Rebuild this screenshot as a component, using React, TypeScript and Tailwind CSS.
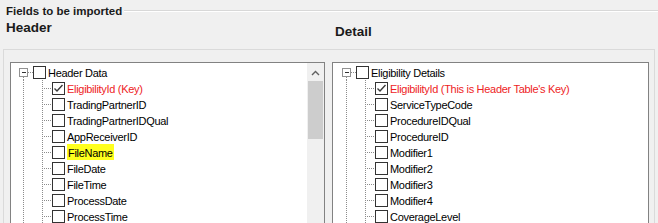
import React from 'react';

type Node = { label: string; checked?: boolean; red?: boolean; mark?: boolean };

const headerFields: Node[] = [
    { label: 'EligibilityId (Key)', checked: true, red: true },
    { label: 'TradingPartnerID' },
    { label: 'TradingPartnerIDQual' },
    { label: 'AppReceiverID' },
    { label: 'FileName', mark: true },
    { label: 'FileDate' },
    { label: 'FileTime' },
    { label: 'ProcessDate' },
    { label: 'ProcessTime' },
];

const detailFields: Node[] = [
    { label: "EligibilityId (This is Header Table's Key)", checked: true, red: true },
    { label: 'ServiceTypeCode' },
    { label: 'ProcedureIDQual' },
    { label: 'ProcedureID' },
    { label: 'Modifier1' },
    { label: 'Modifier2' },
    { label: 'Modifier3' },
    { label: 'Modifier4' },
    { label: 'CoverageLevel' },
];

const CheckBox = ({ checked }: { checked?: boolean }) => (
    <span className="mt-[2px] w-[13px] h-[13px] shrink-0 border border-[#333333] bg-white flex items-center justify-center">
        {checked && (
            <svg width="11" height="11" viewBox="0 0 11 11">
                <path d="M1.5 5.5 L4 8 L9.5 2" fill="none" stroke="#3a3a3a" strokeWidth="1.4" />
            </svg>
        )}
    </span>
);

const Label = ({ node }: { node: Node }) => (
    <span
        className={
            'ml-[2px] h-[16px] pt-[1px] leading-[16px] whitespace-nowrap ' +
            (node.red ? 'text-[#ee1c24] ' : 'text-black ') +
            (node.mark ? 'bg-[#ffff1e] -ml-[0px] px-[1px]' : '')
        }
    >
        {node.label}
    </span>
);

const RootRow = ({ label }: { label: string }) => (
    <div className="flex items-start h-[16px]">
        <svg width="22" height="16" viewBox="0 0 22 16" className="shrink-0" shapeRendering="crispEdges">
            <line x1="12.5" y1="13" x2="12.5" y2="16" stroke="#8c8c8c" strokeDasharray="1 1" />
            <line x1="17" y1="8.5" x2="22" y2="8.5" stroke="#8c8c8c" strokeDasharray="1 1" />
            <rect x="8.5" y="4.5" width="8" height="8" fill="#ffffff" stroke="#919191" />
            <line x1="10.5" y1="8.5" x2="15" y2="8.5" stroke="#333333" />
        </svg>
        <CheckBox />
        <Label node={{ label }} />
    </div>
);

const ChildRow = ({ node }: { node: Node }) => (
    <div className="flex items-start h-[16px]">
        <svg width="41" height="16" viewBox="0 0 41 16" className="shrink-0" shapeRendering="crispEdges">
            <line x1="12.5" y1="0" x2="12.5" y2="16" stroke="#8c8c8c" strokeDasharray="1 1" />
            <line x1="31.5" y1="0" x2="31.5" y2="16" stroke="#8c8c8c" strokeDasharray="1 1" />
            <line x1="33" y1="8.5" x2="41" y2="8.5" stroke="#8c8c8c" strokeDasharray="1 1" />
        </svg>
        <CheckBox checked={node.checked} />
        <Label node={node} />
    </div>
);

const Tree = ({ root, items }: { root: string; items: Node[] }) => (
    <div className="flex flex-col pt-[1px]">
        <RootRow label={root} />
        {items.map(n => (
            <ChildRow key={n.label} node={n} />
        ))}
    </div>
);

export default function App() {
    return (
        <div className="w-[658px] h-[223px] overflow-hidden bg-[#f0f0f0] font-['Liberation_Sans',Arial,sans-serif] text-[11px] tracking-[-0.3px]">
            {/* group box caption */}
            <div className="flex items-start h-[20px]">
                <span className="ml-[6px] mt-[5px] leading-[13px] text-[11.5px] font-bold tracking-normal text-[#1a1a1a]">
                    Fields to be imported
                </span>
                <div className="flex-1 ml-[2px] mt-[10px] h-[2px] border-t border-[#d8d8d8] border-b border-b-white" />
            </div>

            <div className="flex h-[29px] text-[13.5px] font-bold tracking-normal text-[#1a1a1a] leading-[16px]">
                <div className="w-[335px] pl-[6px]">Header</div>
                <div className="mt-[4px]">Detail</div>
            </div>

            <div className="ml-[3px] w-[652px] h-[200px] border-t border-l border-r border-[#dadada] pt-[12px] pl-[6px] flex gap-[7px]">
                <div className="w-[315px] h-[190px] border border-[#828282] bg-white flex">
                    <div className="flex-1 overflow-hidden">
                        <Tree root="Header Data" items={headerFields} />
                    </div>
                    <div className="w-[17px] bg-[#f0f0f0] flex flex-col">
                        <div className="h-[18px] flex items-center justify-center pt-[2px]">
                            <svg width="9" height="6" viewBox="0 0 9 6">
                                <path d="M1 5 L4.5 1.5 L8 5" fill="none" stroke="#606060" strokeWidth="1.4" />
                            </svg>
                        </div>
                        <div className="mx-[1px] h-[58px] bg-[#cdcdcd]" />
                    </div>
                </div>
                <div className="w-[317px] h-[190px] border border-[#828282] bg-white pl-[1px]">
                    <Tree root="Eligibility Details" items={detailFields} />
                </div>
            </div>
        </div>
    );
}
